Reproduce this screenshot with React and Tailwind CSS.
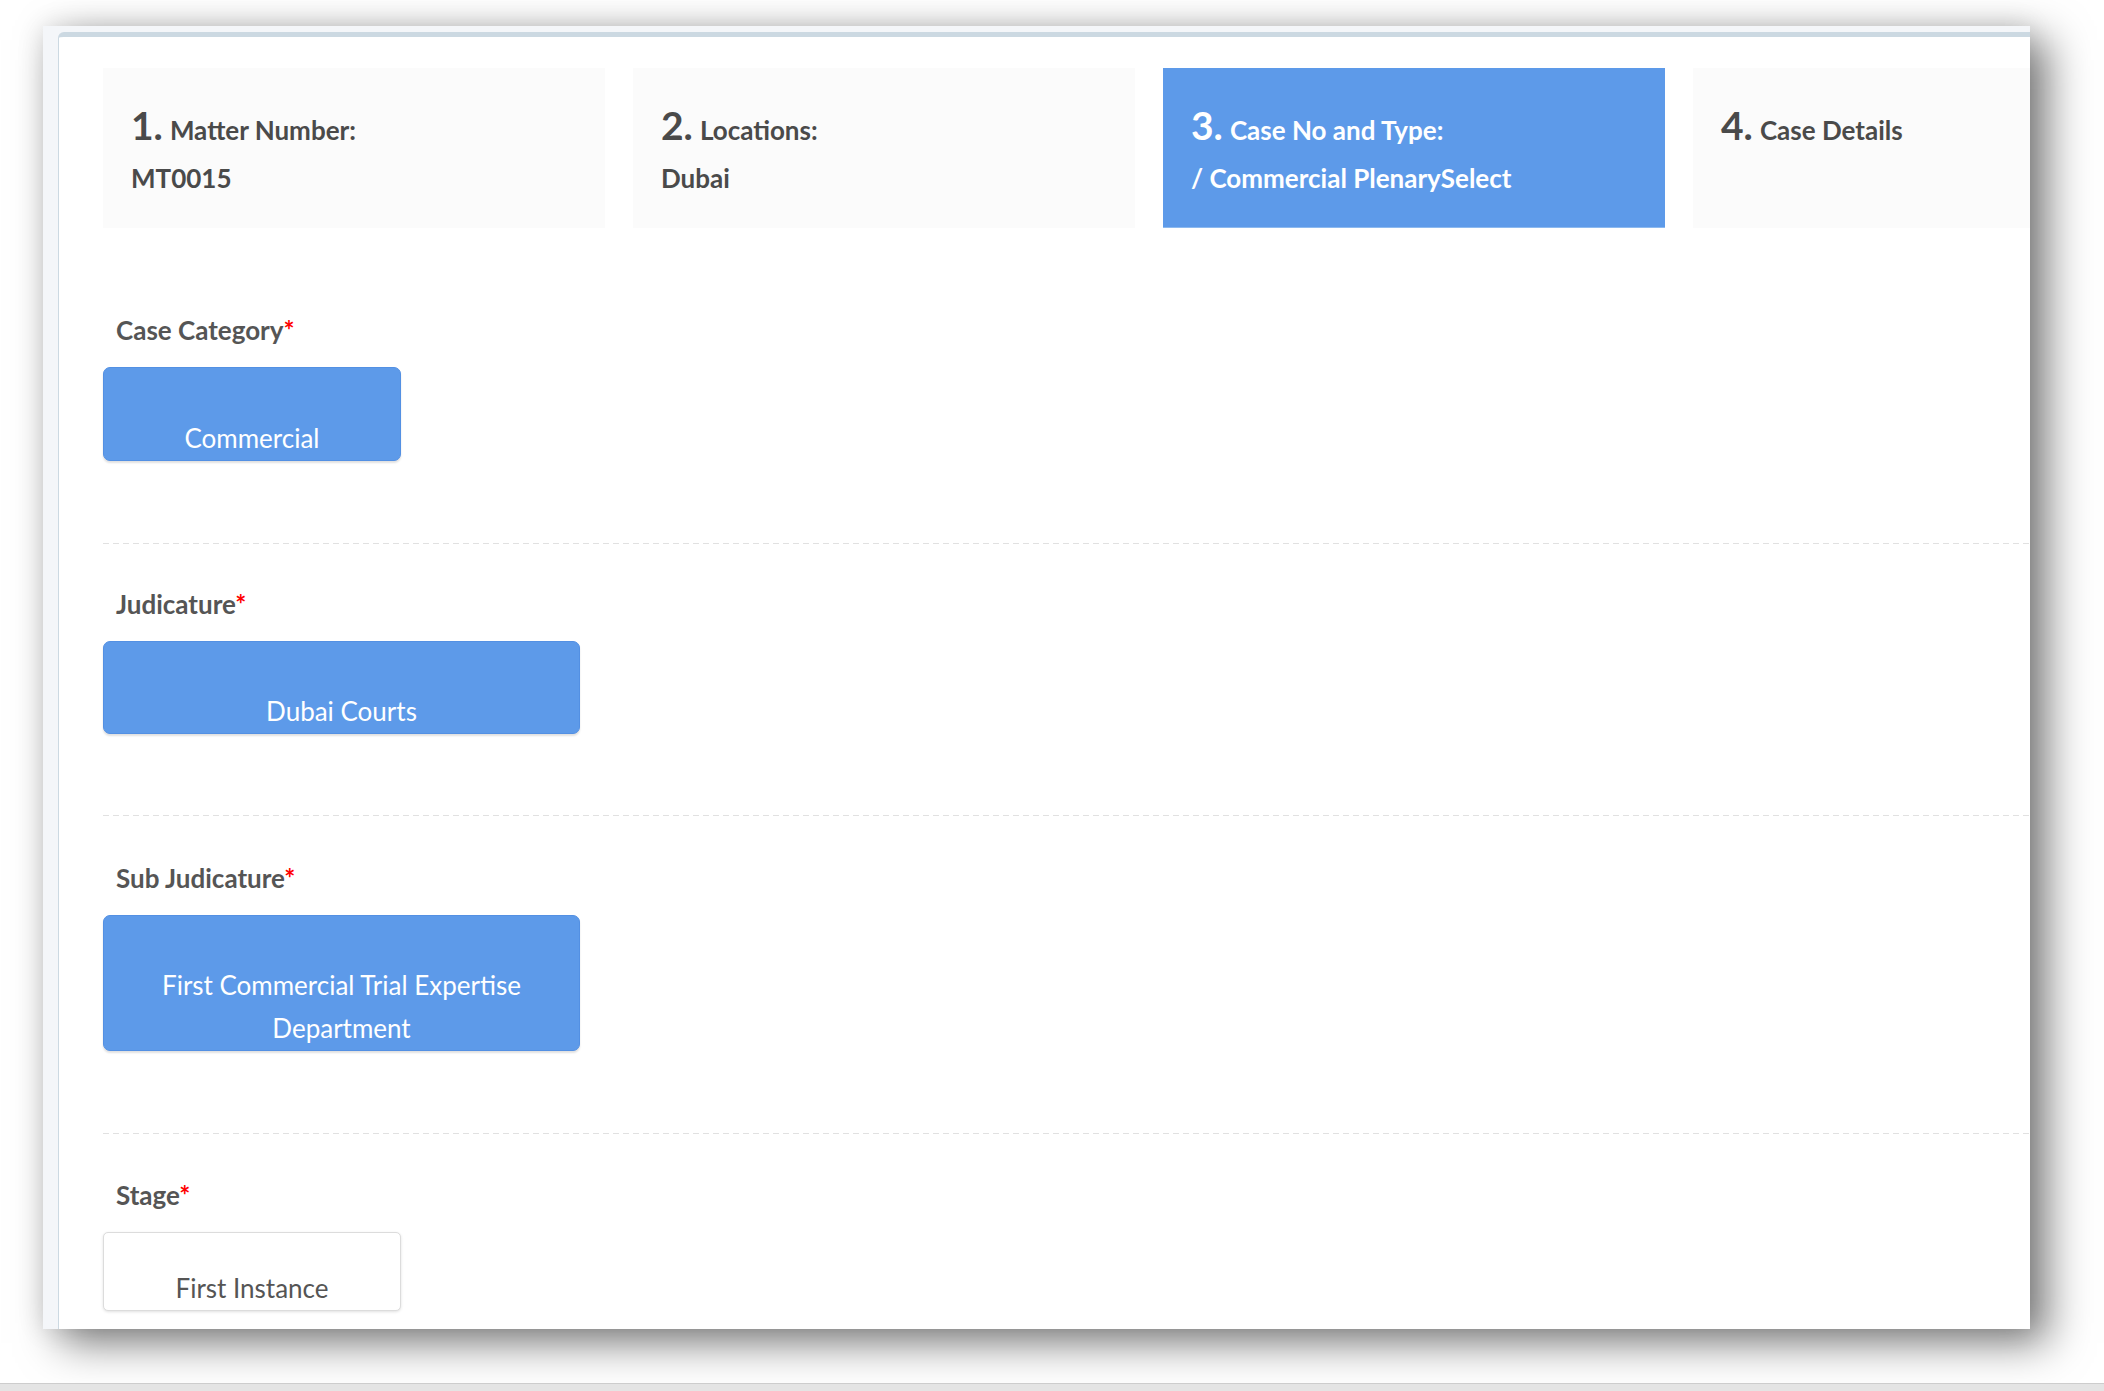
const steps = [
  { n: '1.', label: 'Matter Number:', value: 'MT0015' },
  { n: '2.', label: 'Locations:', value: 'Dubai' },
  { n: '3.', label: 'Case No and Type:', value: '/ Commercial PlenarySelect', active: true },
  { n: '4.', label: 'Case Details', value: '' },
]

function StepCard({ step }) {
  const tone = step.active
    ? 'bg-[#5d9ae9] text-white border-b border-[#8cb9ef]'
    : 'bg-[#fbfbfb] text-[#4a4a4a]'
  return (
    <div className={`w-[502px] h-[160px] shrink-0 pl-[28px] pt-[33px] font-bold ${tone}`}>
      <div className="flex items-baseline text-[39px] leading-[48px]">
        <span>{step.n}</span>
        <span className="ml-[7px] text-[26px] leading-none">{step.label}</span>
      </div>
      {step.value && <div className="mt-[11px] text-[26px] leading-[36px]">{step.value}</div>}
    </div>
  )
}

function Field({ label, value, width, height, filled = true }) {
  const box = filled
    ? 'bg-[#5d9ae9] border-[#5390e3] text-white shadow-[0_2px_2px_rgba(0,0,0,0.12)] rounded-[7px]'
    : 'bg-white border-[#dcdcdc] text-[#555] shadow-[0_1px_3px_rgba(0,0,0,0.12)] rounded-[5px]'
  return (
    <div>
      <div className="pl-[13px] mb-[19px] text-[26px] leading-[36px] font-bold text-[#555]">
        {label}
        <span className="text-[#ff0000]">*</span>
      </div>
      <div
        className={`flex flex-col justify-end items-center border px-6 text-center text-[26px] leading-[43px] ${box} ${width} ${height}`}
      >
        {value}
      </div>
    </div>
  )
}

function Dashed() {
  return <div className="h-px bg-[repeating-linear-gradient(to_right,#e1e1e1_0_6px,transparent_6px_10px)]" />
}

export default function App() {
  return (
    <div className="w-[2104px] h-[1391px] bg-white overflow-hidden font-['Lato',sans-serif]">
      <div className="pt-[26px] pl-[43px] w-[2030px]">
        <div className="h-[1303px] bg-[#f4f6f9] pl-[15px] pt-[6px] shadow-[18px_14px_40px_rgba(0,0,0,0.5),0_0_26px_rgba(0,0,0,0.12)]">
          <div className="h-full bg-white border-t-[5px] border-l border-[#ccd9e2] rounded-tl-[6px] overflow-hidden pl-[44px]">
            <div className="mt-[31px] flex gap-[28px]">
              {steps.map((s) => (
                <StepCard key={s.n} step={s} />
              ))}
            </div>

            <div className="mt-[84px]">
              <Field label="Case Category" value="Commercial" width="w-[298px]" height="h-[94px]" />
            </div>
            <div className="mt-[82px]">
              <Dashed />
            </div>
            <div className="mt-[42px]">
              <Field label="Judicature" value="Dubai Courts" width="w-[477px]" height="h-[93px]" />
            </div>
            <div className="mt-[81px]">
              <Dashed />
            </div>
            <div className="mt-[44px]">
              <Field
                label="Sub Judicature"
                value={<>First Commercial Trial Expertise<br />Department</>}
                width="w-[477px]"
                height="h-[136px]"
              />
            </div>
            <div className="mt-[82px]">
              <Dashed />
            </div>
            <div className="mt-[43px]">
              <Field label="Stage" value="First Instance" width="w-[298px]" height="h-[79px]" filled={false} />
            </div>
          </div>
        </div>
      </div>
      <div className="mt-[54px] h-[8px] bg-[#e4e4e4] border-t border-[#cdcdcd]" />
    </div>
  )
}
